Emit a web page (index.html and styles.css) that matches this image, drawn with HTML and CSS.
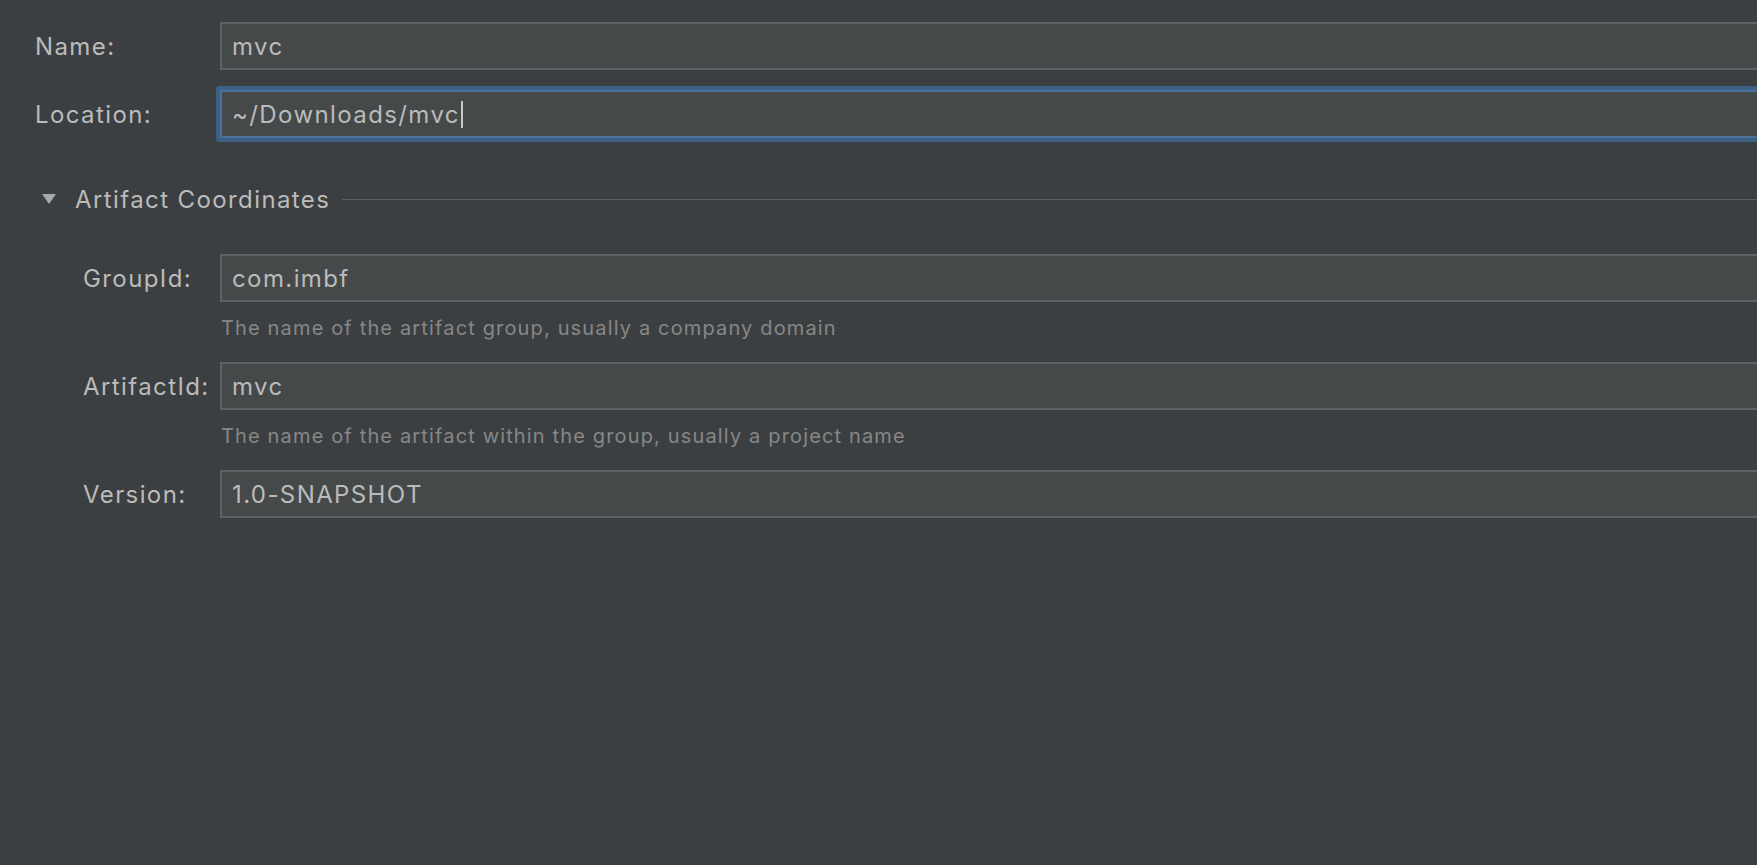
FILE: index.html
```html
<!DOCTYPE html>
<html lang="en">
<head>
<meta charset="utf-8">
<title>New Project</title>
<link rel="stylesheet" href="styles.css">
</head>
<body>
<div class="form">
  <div class="row">
    <label class="label">Name:</label>
    <div class="field"><span class="value">mvc</span></div>
  </div>
  <div class="row row-location">
    <label class="label">Location:</label>
    <div class="field focused"><span class="value">~/Downloads/mvc</span><span class="caret"></span></div>
  </div>

  <div class="section-header">
    <svg class="toggle" width="14" height="10" viewBox="0 0 14 10"><path d="M0 0 H14 L7 10 Z" fill="#a6a8aa"/></svg>
    <span class="section-title">Artifact Coordinates</span>
    <span class="section-line"></span>
  </div>

  <div class="section">
    <div class="row sub-row first">
      <label class="label">GroupId:</label>
      <div class="field"><span class="value">com.imbf</span></div>
    </div>
    <div class="help">The name of the artifact group, usually a company domain</div>
    <div class="row sub-row">
      <label class="label">ArtifactId:</label>
      <div class="field"><span class="value">mvc</span></div>
    </div>
    <div class="help">The name of the artifact within the group, usually a project name</div>
    <div class="row sub-row">
      <label class="label">Version:</label>
      <div class="field"><span class="value">1.0-SNAPSHOT</span></div>
    </div>
  </div>
</div>
</body>
</html>
```

FILE: styles.css
```css
html, body {
  margin: 0;
  padding: 0;
  background: #3c3f41;
  height: 100%;
  overflow: hidden;
}

body {
  font-family: Inter, "Noto Sans", "Liberation Sans", sans-serif;
  color: #bbbbbb;
}

.form {
  display: flex;
  flex-direction: column;
  padding: 22px 0 0 35px;
}

.row {
  display: grid;
  grid-template-columns: 185px 1fr;
  align-items: center;
  height: 48px;
}

.row-location {
  margin-top: 20px;
}

.label {
  font-size: 24px;
  letter-spacing: 1.4px;
  color: #bbbbbb;
}

.field {
  box-sizing: border-box;
  height: 48px;
  display: flex;
  align-items: center;
  background: #45494a;
  border: 2px solid #5f6264;
  border-right: none;
  padding-left: 10px;
  font-size: 24px;
  letter-spacing: 1.4px;
  color: #bbbbbb;
}

.field.focused {
  border-color: #4a719a;
  box-shadow: 0 0 0 4px #3d6185;
  border-radius: 1px;
}

.caret {
  display: inline-block;
  width: 2px;
  height: 27px;
  margin-left: 1px;
  background: #c8c8c8;
}

.section-header {
  display: flex;
  align-items: center;
  height: 30px;
  margin-top: 46px;
  padding-left: 7px;
}

.toggle {
  flex: none;
}

.section-title {
  font-size: 24px;
  letter-spacing: 1.4px;
  color: #bbbbbb;
  margin-left: 19px;
}

.section-line {
  flex: 1;
  height: 1px;
  background: #5c5f62;
  margin-left: 12px;
  margin-top: 1px;
}

.section {
  display: flex;
  flex-direction: column;
  padding-left: 48px;
}

.sub-row {
  grid-template-columns: 137px 1fr;
  margin-top: 22px;
}

.sub-row.first {
  margin-top: 40px;
}

.help {
  margin-top: 14px;
  height: 24px;
  line-height: 24px;
  padding-left: 138px;
  font-size: 20px;
  letter-spacing: 1.15px;
  color: #878787;
}
```
